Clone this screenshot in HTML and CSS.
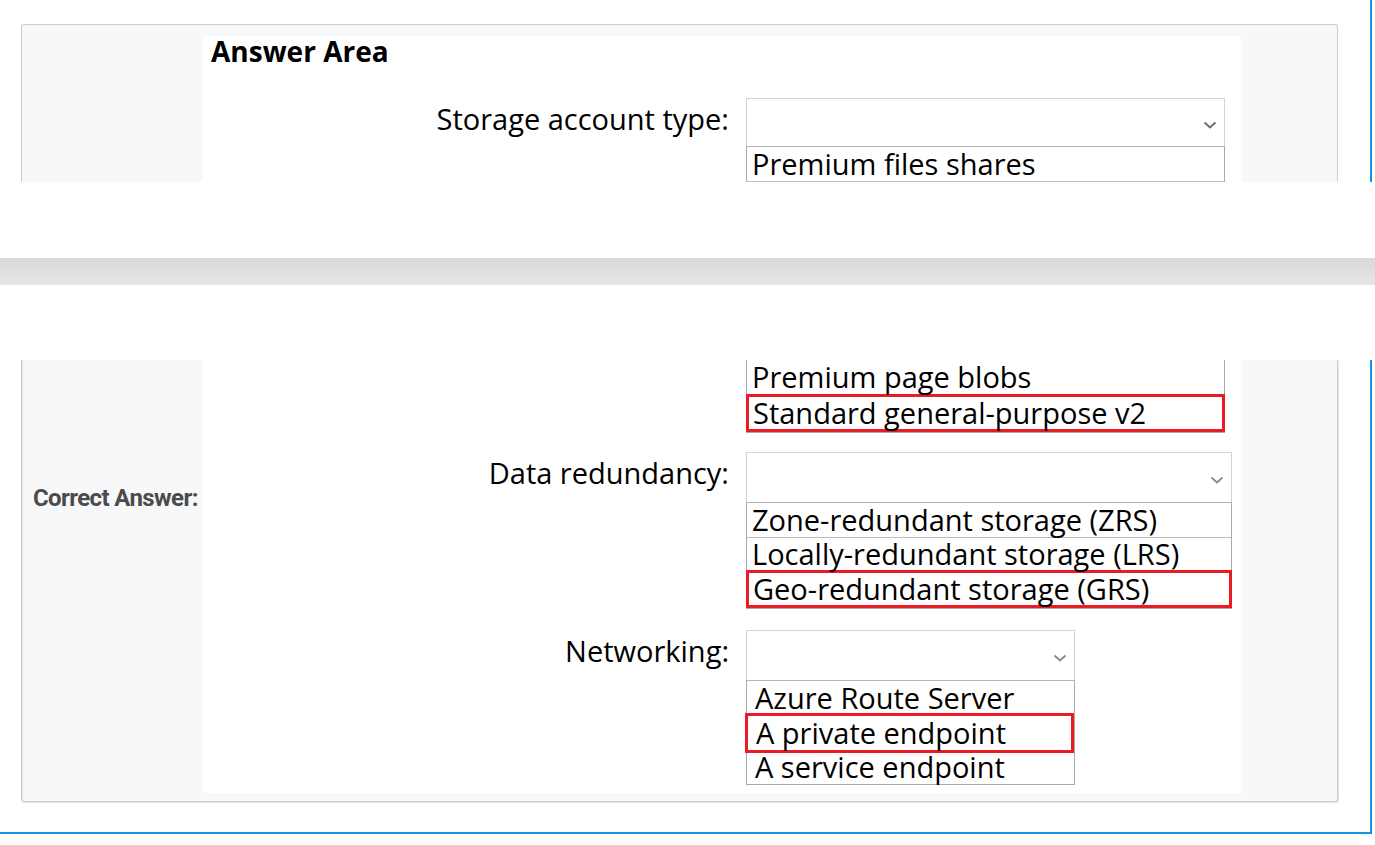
FILE: index.html
```html
<!DOCTYPE html>
<html lang="en">
<head>
<meta charset="utf-8">
<title>Answer Area</title>
<link rel="stylesheet" href="styles.css">
</head>
<body>
<div class="page">
  <section class="clip clip-top">
    <div class="card card-top">
      <div class="card-side"></div>
      <div class="answer">
        <h2 class="answer-title">Answer Area</h2>
        <div class="field field-first">
          <div class="field-label">Storage account type:</div>
          <div class="field-control w-storage">
            <div class="select"><svg class="chev" width="14" height="8" viewBox="0 0 14 8"><polyline points="1.5,1.5 7,6.5 12.5,1.5" fill="none" stroke="#707070" stroke-width="2"/></svg></div>
            <ul class="options">
              <li>Premium files shares</li>
              <li class="empty"></li>
            </ul>
          </div>
        </div>
      </div>
    </div>
  </section>

  <div class="band"></div>

  <section class="clip clip-bottom">
    <div class="card card-bottom">
      <div class="card-side"><span class="correct">Correct Answer:</span></div>
      <div class="answer answer-cont">
        <div class="field">
          <div class="field-label"></div>
          <div class="field-control w-storage">
            <ul class="options options-cont">
              <li>Premium page blobs</li>
              <li class="picked">Standard general-purpose v2</li>
            </ul>
          </div>
        </div>
        <div class="field field-gap">
          <div class="field-label">Data redundancy:</div>
          <div class="field-control w-redundancy">
            <div class="select select-tall"><svg class="chev" width="14" height="8" viewBox="0 0 14 8"><polyline points="1.5,1.5 7,6.5 12.5,1.5" fill="none" stroke="#8a8a8a" stroke-width="1.8"/></svg></div>
            <ul class="options">
              <li>Zone-redundant storage (ZRS)</li>
              <li>Locally-redundant storage (LRS)</li>
              <li class="picked">Geo-redundant storage (GRS)</li>
            </ul>
          </div>
        </div>
        <div class="field field-gap2">
          <div class="field-label">Networking:</div>
          <div class="field-control w-network">
            <div class="select select-tall"><svg class="chev" width="14" height="8" viewBox="0 0 14 8"><polyline points="1.5,1.5 7,6.5 12.5,1.5" fill="none" stroke="#8a8a8a" stroke-width="1.8"/></svg></div>
            <ul class="options options-pad">
              <li>Azure Route Server</li>
              <li class="picked picked-over">A private endpoint</li>
              <li class="plain">A service endpoint</li>
            </ul>
          </div>
        </div>
      </div>
    </div>
  </section>
</div>
</body>
</html>
```

FILE: styles.css
```css
* { box-sizing: border-box; }

body {
  margin: 0;
  background: #fff;
  font-family: "Open Sans", "Noto Sans", sans-serif;
  color: #000;
}

.page { width: 1375px; }

.clip {
  width: 1372px;
  border-right: 2px solid #1493e6;
  padding-left: 21px;
}

.clip-top {
  height: 182px;
  padding-top: 24px;
  overflow: hidden;
}

.clip-bottom {
  height: 474px;
  border-bottom: 2px solid #1493e6;
}

.band {
  height: 27px;
  margin: 76px 0 75px;
  background: linear-gradient(#d8d8d8, #e6e6e6);
}

.card {
  width: 1317px;
  display: flex;
  background: #f7f8fa;
  border: 1px solid #cdcdcd;
  padding-right: 96px;
}

.card-top {
  border-bottom: none;
  border-radius: 3px 3px 0 0;
  padding-top: 11px;
  height: 200px;
}

.card-bottom {
  border-top: none;
  border-radius: 0 0 3px 3px;
  padding-bottom: 8px;
  box-shadow: 1px 1px 1px rgba(0, 0, 0, 0.12), inset 1px 0 0 #e6e6e6;
}

.card-side {
  width: 181px;
  flex: none;
  padding: 125px 0 0 11px;
}

.correct {
  display: block;
  font-family: "Roboto", "Liberation Sans", sans-serif;
  font-weight: 700;
  font-size: 24px;
  line-height: 26px;
  letter-spacing: -0.6px;
  color: #4b4b4b;
  white-space: nowrap;
}

.answer {
  width: 1038px;
  flex: none;
  background: #fff;
}

.answer-cont { padding-bottom: 8px; }

.answer-title {
  margin: 0;
  padding: 0 0 0 8px;
  font-size: 28px;
  line-height: 30px;
  font-weight: 700;
}

.field {
  display: grid;
  grid-template-columns: 526px auto;
  column-gap: 17px;
  align-items: start;
}

.field-first { margin-top: 32px; }
.field-gap { margin-top: 19px; }
.field-gap2 { margin-top: 21px; }

.field-label {
  text-align: right;
  font-size: 29px;
  line-height: 42px;
  white-space: nowrap;
}

.field-control { display: flex; flex-direction: column; }
.w-storage { width: 479px; }
.w-redundancy { width: 486px; }
.w-network { width: 329px; }

.select {
  height: 48px;
  border: 1px solid #d4d4d4;
  border-bottom: none;
  display: flex;
  align-items: center;
  justify-content: flex-end;
  padding: 4px 7px 0 0;
}

.select-tall { height: 50px; }

.options {
  list-style: none;
  margin: 0;
  padding: 0;
  border: 1px solid #a9a9a9;
  border-top-color: #b5b5b5;
  font-size: 29px;
}

.options-cont { border-top: none; }

.options li {
  height: 33px;
  line-height: 32px;
  padding-left: 5px;
  white-space: nowrap;
  border-top: 1px solid #bdbdbd;
}

.options li:first-child {
  border-top: none;
  height: 34px;
  line-height: 34px;
}

.options li.empty { height: 34px; }

.options-pad li { padding-left: 8px; }

.options li.picked {
  height: 38px;
  line-height: 32px;
  border: 3px solid #ea1b25;
  margin: 0 -1px;
  padding-left: 4px;
}

.options-pad li.picked {
  height: 40px;
  line-height: 34px;
  margin: -2px 0 0 -2px;
  padding-left: 8px;
}

.options li.plain {
  border-top: none;
  height: 31px;
  line-height: 27px;
}
```
